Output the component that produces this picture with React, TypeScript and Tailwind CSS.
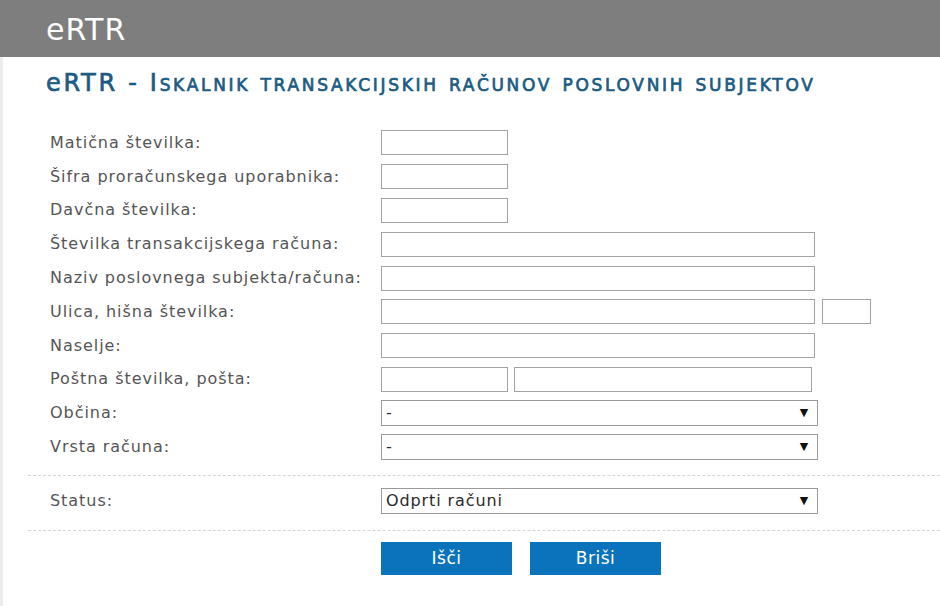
import type { ReactNode } from 'react';

const labelFont = { fontFamily: '"DejaVu Sans", Verdana, sans-serif' };

function TextBox({ w }: { w: string }) {
  return <input type="text" className={`h-[25px] border border-[#a3a3a3] bg-white ${w}`} />;
}

function SelectBox({ value }: { value: string }) {
  return (
    <div className="flex h-[26px] w-[437px] items-center justify-between border border-[#9a9a9a] bg-white pl-[4px] pr-[8px] text-[16px] tracking-[0.9px] text-[#2a2a2a]">
      <span>{value}</span>
      <span className="text-[11px] text-[#111]">▼</span>
    </div>
  );
}

function Row({ label, children }: { label: string; children: ReactNode }) {
  return (
    <div className="flex h-[33.8px] items-center">
      <div className="w-[331px] text-[16px] tracking-[0.95px] text-[#555]">{label}</div>
      <div className="flex items-center gap-[6px]">{children}</div>
    </div>
  );
}

export default function App() {
  return (
    <div className="min-h-screen bg-white" style={labelFont}>
      {/* top bar */}
      <header className="flex h-[57px] items-center bg-[#7e7e7e] pl-[46px]">
        <span className="mt-[2px] text-[30px] leading-none tracking-[1px] text-white">eRTR</span>
      </header>

      <div className="border-l-[3px] border-[#ececec] pb-[31px]">
        <h1 className="pl-[43px] pt-[13px] text-[24px] font-normal leading-[26px] tracking-[2.7px] text-[#1c5b83] [font-variant:small-caps] [-webkit-text-stroke:0.7px_#1c5b83]">
          <span className="[font-variant:normal]">e</span>RTR - Iskalnik transakcijskih računov poslovnih subjektov
        </h1>

        <form className="pt-[30px]" onSubmit={(e) => e.preventDefault()}>
          <div className="pl-[47px]">
            <Row label="Matična številka:">
              <TextBox w="w-[127px]" />
            </Row>
            <Row label="Šifra proračunskega uporabnika:">
              <TextBox w="w-[127px]" />
            </Row>
            <Row label="Davčna številka:">
              <TextBox w="w-[127px]" />
            </Row>
            <Row label="Številka transakcijskega računa:">
              <TextBox w="w-[434px]" />
            </Row>
            <Row label="Naziv poslovnega subjekta/računa:">
              <TextBox w="w-[434px]" />
            </Row>
            <Row label="Ulica, hišna številka:">
              <TextBox w="w-[434px]" />
              <TextBox w="w-[49px] ml-[1px]" />
            </Row>
            <Row label="Naselje:">
              <TextBox w="w-[434px]" />
            </Row>
            <Row label="Poštna številka, pošta:">
              <TextBox w="w-[127px]" />
              <TextBox w="w-[298px]" />
            </Row>
            <Row label="Občina:">
              <SelectBox value="-" />
            </Row>
            <Row label="Vrsta računa:">
              <SelectBox value="-" />
            </Row>
          </div>

          <div className="ml-[25px] mt-[11px] border-y border-dashed border-[#d4d4d4] pb-[16px] pl-[22px] pt-[12px]">
            <div className="flex h-[26px] items-center">
              <div className="w-[331px] text-[16px] tracking-[0.95px] text-[#555]">Status:</div>
              <SelectBox value="Odprti računi" />
            </div>
          </div>

          <div className="mt-[11px] flex gap-[18px] pl-[378px]">
            <button type="submit" className="h-[33px] w-[131px] bg-[#0b72bc] text-[17px] tracking-[0.5px] text-white">
              Išči
            </button>
            <button type="reset" className="h-[33px] w-[131px] bg-[#0b72bc] text-[17px] tracking-[0.5px] text-white">
              Briši
            </button>
          </div>
        </form>
      </div>
    </div>
  );
}
